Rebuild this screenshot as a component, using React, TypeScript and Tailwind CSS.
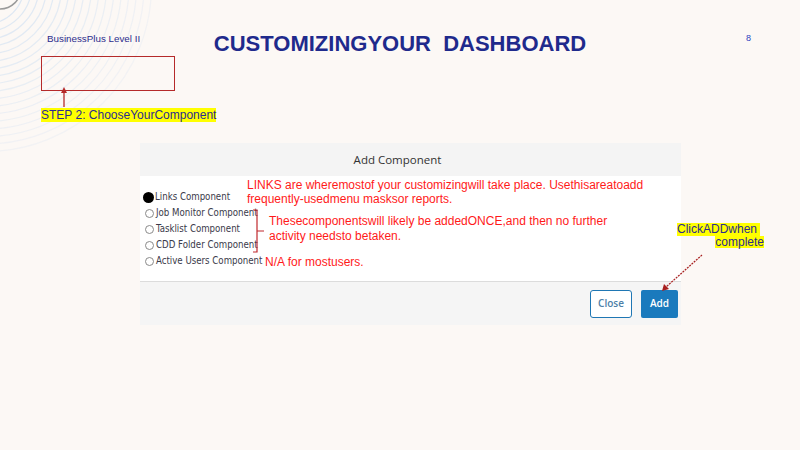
import React from 'react';

const arial = { fontFamily: '"Liberation Sans", Arial, sans-serif' };
const ui = { fontFamily: '"Open Sans", "Noto Sans", sans-serif' };
const narrow = { fontFamily: '"Liberation Sans Narrow", "DejaVu Sans Condensed", "Open Sans", sans-serif' };

const components = [
  'Links Component',
  'Job Monitor Component',
  'Tasklist Component',
  'CDD Folder Component',
  'Active Users Component',
];

const Arcs = () => (
  <svg className="pointer-events-none absolute left-0 top-0" width="170" height="160" viewBox="0 0 170 160">
    {Array.from({ length: 18 }).map((_, i) => (
      <circle
        key={i}
        cx={-14}
        cy={-14}
        r={38 + i * 7.5}
        fill="none"
        stroke="#dde7f3"
        strokeWidth={1.2}
        opacity={1 - i * 0.04}
      />
    ))}
    <circle cx={0} cy={-12} r={21} fill="none" stroke="#9a9a9a" strokeWidth={1.5} />
  </svg>
);

const Radio = ({ checked }: { checked: boolean }) =>
  checked ? (
    <span className="ml-[-2px] mr-[1px] inline-block h-[11px] w-[11px] shrink-0 rounded-full bg-black" />
  ) : (
    <span className="mr-[2px] inline-block h-[9px] w-[9px] shrink-0 rounded-full border border-[#8a8a8a] bg-white" />
  );

export default function App() {
  return (
    <div className="relative h-[450px] w-[800px] overflow-hidden bg-[#fcf8f5]" style={arial}>
      <Arcs />

      <div className="relative flex h-[56px] items-start">
        <div className="w-[213px] whitespace-nowrap pl-[47px] pt-[32px] text-[9.8px] text-[#2c2c8c]">BusinessPlus Level II</div>
        <div className="w-[374px] whitespace-pre pt-[30px] text-center text-[22px] font-bold leading-[28px] text-[#1f2a8c]">
          CUSTOMIZINGYOUR  DASHBOARD
        </div>
        <div className="pl-[159px] pt-[32px] text-[9px] text-[#2b3bbf]">8</div>
      </div>

      <div className="relative ml-[41px] h-[35px] w-[134px] border border-[#b52a2a]" />
      <div className="h-[17px]" />
      <div className="relative ml-[41px] flex">
        <span className="bg-[#ffff00] text-[12px] leading-[14px] text-[#2b2b8f]">STEP 2: ChooseYourComponent</span>
      </div>

      <div className="relative mt-[21px] flex items-start">
        <div className="ml-[140px] w-[541px]" style={ui}>
          <div className="flex h-[33px] items-center justify-center bg-[#f4f4f4] pr-[26px] text-[11.5px] text-[#333]">Add Component</div>
          <div className="flex h-[105px] bg-white">
            <div className="w-[107px] shrink-0 pl-[5px] pt-[13px]">
              {components.map((c, i) => (
                <div key={c} className="flex h-[16px] items-center whitespace-nowrap text-[9.6px] text-[#3a3a4a]" style={narrow}>
                  <Radio checked={i === 0} />
                  <span>{c}</span>
                </div>
              ))}
            </div>
            <div className="pt-[2px] text-[12px] text-[#ff1a1a]" style={arial}>
              <div className="leading-[14px]">
                <div>LINKS are wheremostof your customizingwill take place. Usethisareatoadd</div>
                <div>frequently-usedmenu masksor reports.</div>
              </div>
              <div className="mt-[3px] flex items-center">
                <svg width="17" height="44" viewBox="0 0 17 44" className="ml-[5px] shrink-0">
                  <path d="M1 1 H5 V43 H1 M5 22 H12" fill="none" stroke="#c0282d" strokeWidth={1.2} />
                </svg>
                <div className="-mt-[4px] leading-[15px]">
                  <div>Thesecomponentswill likely be addedONCE,and then no further</div>
                  <div>activity needsto betaken.</div>
                </div>
              </div>
              <div className="ml-[18px] mt-[2px] leading-[14px]">N/A for mostusers.</div>
            </div>
          </div>
          <div className="flex h-[44px] items-center justify-end gap-[9px] border-t border-[#dcdcdc] bg-[#f5f5f5] pr-[3px]">
            <button className="h-[28px] w-[42px] rounded-[3px] border border-[#1f77b4] bg-white text-[10px] font-semibold text-[#4d7fa8]">
              Close
            </button>
            <button className="h-[28px] w-[37px] rounded-[2px] bg-[#1a7abd] text-[10px] font-semibold text-white">Add</button>
          </div>
        </div>
        <div className="-ml-[4px] mt-[80px] flex w-[87px] flex-col items-end text-[12px] leading-[12.5px] text-[#2b2b8f]">
          <span className="self-start whitespace-pre bg-[#ffff00]">ClickADDwhen </span>
          <span className="bg-[#ffff00]">complete</span>
        </div>
      </div>

      {/* annotation arrows */}
      <svg className="pointer-events-none absolute left-0 top-0" width="800" height="450" viewBox="0 0 800 450">
        <line x1="64" y1="107" x2="64" y2="92" stroke="#b52a2a" strokeWidth={1.3} />
        <polygon points="64,87 61,93 67,93" fill="#b52a2a" />
        <line x1="702" y1="255" x2="666" y2="287" stroke="#a82020" strokeWidth={1.2} strokeDasharray="2 1" />
        <polygon points="662,291 664,284 669,289" fill="#a82020" />
      </svg>
    </div>
  );
}
